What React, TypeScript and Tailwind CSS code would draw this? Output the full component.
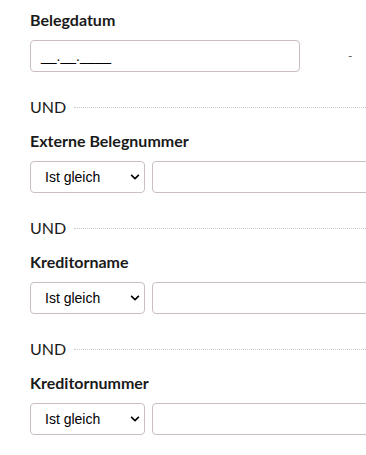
import { FaChevronDown } from "react-icons/fa";

const lato = { fontFamily: "Lato, 'Open Sans', sans-serif" };

function Und() {
  return (
    <div className="flex items-center h-5 mt-[25px] mb-[14px]">
      <span className="text-[16px] text-[#1a1a1a] leading-5" style={lato}>
        UND
      </span>
      <div className="flex-1 ml-[8px] border-t border-dotted border-[#c8c8c8]" />
    </div>
  );
}

function Label({ text }: { text: string }) {
  return (
    <div className="h-5 leading-5 text-[16px] font-bold text-[#1a1a1a] mb-[10px]" style={lato}>
      {text}
    </div>
  );
}

function FilterRow() {
  return (
    <div className="flex gap-[7px]">
      <div className="w-[115px] h-8 shrink-0 flex items-center justify-between pl-[14px] pr-[4px] border border-[#c9bfc3] rounded-[4px] bg-white">
        <span className="text-[14px] text-black" style={{ fontFamily: "'Liberation Sans', Arial, sans-serif" }}>
          Ist gleich
        </span>
        <FaChevronDown className="text-[10px] text-black" />
      </div>
      <div className="w-[260px] h-8 shrink-0 border border-[#c9bfc3] rounded-[4px] bg-white" />
    </div>
  );
}

export default function App() {
  return (
    <div className="w-[366px] h-[455px] bg-white overflow-hidden pl-[30px] pt-[10px]">
      <Label text="Belegdatum" />
      <div className="flex items-center">
        <div className="w-[270px] h-8 border border-[#c9bfc3] rounded-[4px] flex items-center pl-[10px]">
          <span className="text-[14px] text-black" style={{ fontFamily: "'Liberation Sans', Arial, sans-serif" }}>
            __.__.____
          </span>
        </div>
        <span className="ml-[48px] text-[12px] text-[#555]" style={lato}>-</span>
      </div>

      <Und />
      <Label text="Externe Belegnummer" />
      <FilterRow />

      <Und />
      <Label text="Kreditorname" />
      <FilterRow />

      <Und />
      <Label text="Kreditornummer" />
      <FilterRow />
    </div>
  );
}
